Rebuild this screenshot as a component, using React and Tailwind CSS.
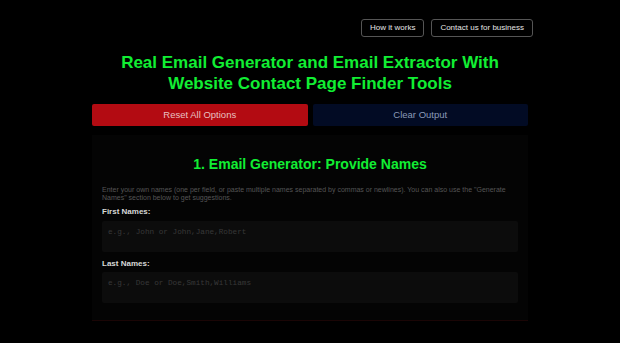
export default function App() {
  const f = { fontFamily: '"Liberation Sans", Arial, sans-serif' };
  const mono = { fontFamily: '"Liberation Mono", "Courier New", monospace' };
  return (
    <div className="min-h-[343px] w-[620px] bg-black overflow-hidden" style={f}>
      <div className="flex justify-end gap-[7px] pt-[19px] pr-[87px]">
        <div className="h-[18px] px-[8px] flex items-center border border-[#555] rounded-[3px] text-[8px] text-[#e5e5e5]">How it works</div>
        <div className="h-[18px] px-[8px] flex items-center border border-[#555] rounded-[3px] text-[8px] text-[#e5e5e5]">Contact us for business</div>
      </div>
      <div className="mt-[15px] text-center text-[#11ee33] font-bold text-[17px] leading-[21px]">
        Real Email Generator and Email Extractor With<br />Website Contact Page Finder Tools
      </div>
      <div className="mx-[92px] mt-[10px] flex gap-[5px]">
        <div className="flex-1 h-[22px] rounded-[2px] bg-[#b30b12] flex items-center justify-center text-[9.5px] text-[#e8c0c0]">Reset All Options</div>
        <div className="flex-1 h-[22px] rounded-[2px] bg-[#020b24] flex items-center justify-center text-[9.5px] text-[#8a9ab8]">Clear Output</div>
      </div>
      <div className="mx-[92px] mt-[9px] h-[186px] bg-[#040404] border-b border-[#1a0505] px-[10px] pt-[21px]">
        <div className="text-center text-[#11ee33] font-bold text-[14px] leading-[16px]">1. Email Generator: Provide Names</div>
        <div className="mt-[14px] text-[7px] leading-[8px] text-[#555]">
          Enter your own names (one per field, or paste multiple names separated by commas or newlines). You can also use the "Generate Names" section below to get suggestions.
        </div>
        <div className="mt-[5px] text-[8px] text-[#d8d8d8] font-bold leading-[10px]">First Names:</div>
        <div className="mt-[4px] h-[31px] rounded-[2px] bg-[#0c0c0c] px-[6px] pt-[6px] text-[7.7px] text-[#383838]" style={mono}>e.g., John or John,Jane,Robert</div>
        <div className="mt-[7px] text-[8px] text-[#d8d8d8] font-bold leading-[10px]">Last Names:</div>
        <div className="mt-[3px] h-[31px] rounded-[2px] bg-[#0c0c0c] px-[6px] pt-[6px] text-[7.7px] text-[#383838]" style={mono}>e.g., Doe or Doe,Smith,Williams</div>
      </div>
    </div>
  );
}
